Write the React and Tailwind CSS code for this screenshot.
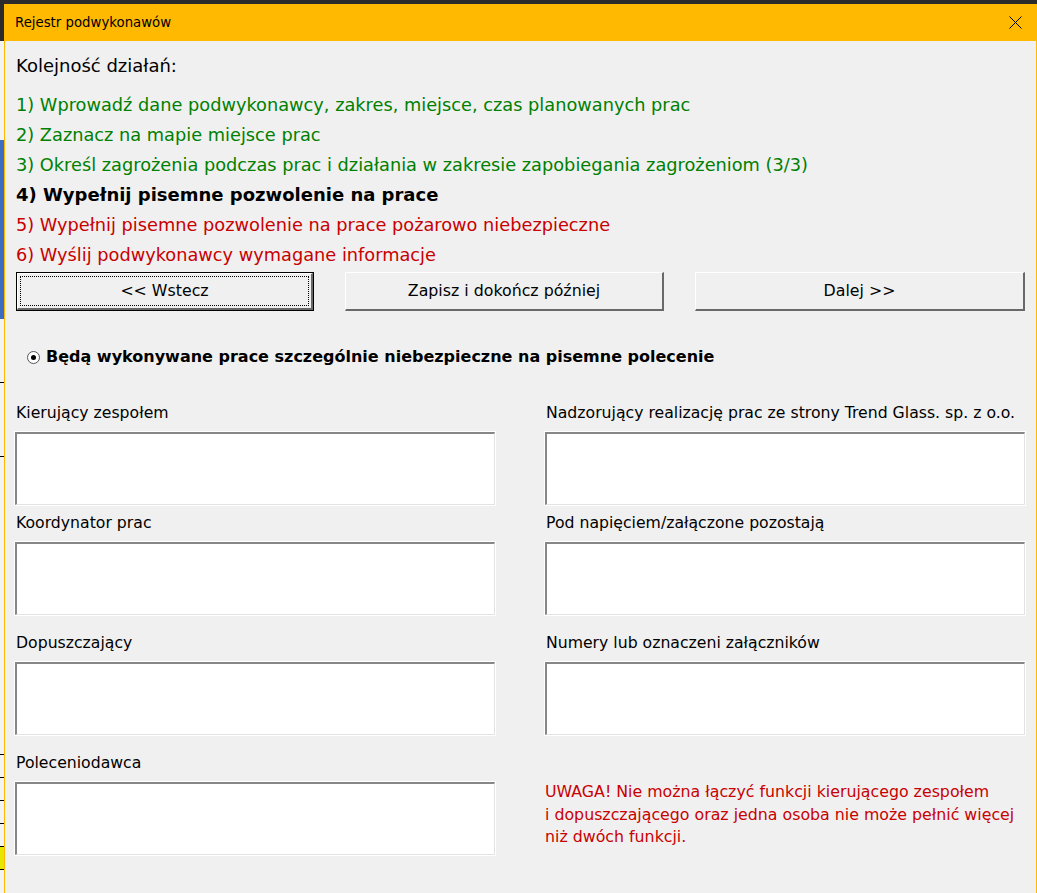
import React from "react";

const font = { fontFamily: '"DejaVu Sans", "Noto Sans", sans-serif' };

const steps = [
  { text: "1) Wprowadź dane podwykonawcy, zakres, miejsce, czas planowanych prac", cls: "text-[#008000]" },
  { text: "2) Zaznacz na mapie miejsce prac", cls: "text-[#008000]" },
  { text: "3) Określ zagrożenia podczas prac i działania w zakresie zapobiegania zagrożeniom (3/3)", cls: "text-[#008000]" },
  { text: "4) Wypełnij pisemne pozwolenie na prace", cls: "text-black font-bold" },
  { text: "5) Wypełnij pisemne pozwolenie na prace pożarowo niebezpieczne", cls: "text-[#c80000]" },
  { text: "6) Wyślij podwykonawcy wymagane informacje", cls: "text-[#c80000]" },
];

// pole tekstowe w stylu 3D (wklęsłe)
const Field = () => (
  <div className="h-[73px] bg-white border-t-2 border-l-2 border-t-[#878787] border-l-[#878787] border-b border-r border-b-[#e3e3e3] border-r-[#e3e3e3] outline outline-1 outline-white" />
);

const Group = ({ label, className = "" }) => (
  <div className={className}>
    <div className="h-[20px] leading-[20px] text-[15.7px] text-black pl-[1px] whitespace-nowrap">{label}</div>
    <div className="mt-[9px]">
      <Field />
    </div>
  </div>
);

const WinButton = ({ children, width, focused }) => (
  <div className={`h-[39px] ${width} ${focused ? "border border-black" : ""}`}>
    <div className="h-full bg-[#f0f0f0] border-t border-l border-t-white border-l-white border-b-2 border-r-2 border-b-[#696969] border-r-[#696969] flex items-center justify-center p-[2px]">
      <div
        className={`w-full h-full flex items-center justify-center text-[15.8px] text-black ${
          focused ? "border border-dotted border-black" : ""
        }`}
      >
        {children}
      </div>
    </div>
  </div>
);

export default function App() {
  return (
    <div className="w-[1037px] h-[893px] flex flex-col overflow-hidden bg-[#2b2b2b]" style={font}>
      <div className="h-[4px] bg-[#2b2b2b]" />
      <div className="flex flex-1">
        {/* fragment arkusza za oknem */}
        <div className="w-[4px] flex flex-col">
          <div className="h-[37px] bg-[#2b2b2b]" />
          <div className="flex-1 bg-[#f3f3f3] flex flex-col">
            <div className="h-[99px]" />
            <div className="h-[179px] bg-[#3d6cc0]" />
            <div className="h-[64px] border-b border-black" />
            <div className="h-[74px] border-b border-black" />
            <div className="h-[298px] border-b border-black" />
            <div className="h-[23px] border-b border-black" />
            <div className="h-[23px] border-b border-black" />
            <div className="h-[23px] border-b border-black" />
            <div className="h-[23px] border-b border-black" />
            <div className="h-[23px] bg-[#e6e600] border-b border-black" />
          </div>
        </div>

        <div className="flex-1 flex flex-col border-l border-r border-[#ffb900]">
          {/* pasek tytułu */}
          <div className="h-[37px] bg-[#ffb900] flex items-center justify-between pl-[10px] pr-[14px]">
            <span className="text-[13.3px] text-black">Rejestr podwykonawów</span>
            <svg width="13" height="13" viewBox="0 0 13 13">
              <path d="M0.5 0.5 L12.5 12.5 M12.5 0.5 L0.5 12.5" stroke="black" strokeWidth="1" />
            </svg>
          </div>

          <div className="flex-1 bg-[#f0f0f0] pl-[10px] pr-[11px]">
            <div className="pt-[12px] pl-[1px] h-[26px] leading-[26px] text-[18px] text-black box-content">
              Kolejność działań:
            </div>

            <div className="mt-[11px] pl-[1px]">
              {steps.map((s) => (
                <div
                  key={s.text}
                  className={`h-[30px] leading-[30px] whitespace-nowrap ${s.cls} ${
                    s.cls.includes("font-bold") ? "text-[18px]" : "text-[17.75px]"
                  }`}
                >
                  {s.text}
                </div>
              ))}
            </div>

            <div className="mt-[2px] flex pl-[1px]">
              <WinButton width="w-[298px]" focused>
                {"<< Wstecz"}
              </WinButton>
              <div className="ml-[31px]">
                <WinButton width="w-[319px]">Zapisz i dokończ później</WinButton>
              </div>
              <div className="ml-[31px]">
                <WinButton width="w-[330px]">{"Dalej >>"}</WinButton>
              </div>
            </div>

            <div className="mt-[34px] h-[24px] flex items-center pl-[12px]">
              <div className="w-[13px] h-[13px] rounded-full border border-[#555] bg-white flex items-center justify-center">
                <div className="w-[5px] h-[5px] rounded-full bg-black" />
              </div>
              <span className="ml-[6px] text-[16px] font-bold text-black whitespace-nowrap">
                Będą wykonywane prace szczególnie niebezpieczne na pisemne polecenie
              </span>
            </div>

            <div className="grid grid-cols-[480px_480px] gap-x-[50px]">
              <Group label="Kierujący zespołem" className="mt-[34px]" />
              <Group label="Nadzorujący realizację prac ze strony Trend Glass. sp. z o.o." className="mt-[34px]" />
              <Group label="Koordynator prac" className="mt-[8px]" />
              <Group label="Pod napięciem/załączone pozostają" className="mt-[8px]" />
              <Group label="Dopuszczający" className="mt-[18px]" />
              <Group label="Numery lub oznaczeni załączników" className="mt-[18px]" />
              <Group label="Poleceniodawca" className="mt-[18px]" />
              <div className="mt-[18px] pt-[28px] text-[15.8px] leading-[22.5px] text-[#c80000] whitespace-nowrap">
                UWAGA! Nie można łączyć funkcji kierującego zespołem
                <br />
                i dopuszczającego oraz jedna osoba nie może pełnić więcej
                <br />
                niż dwóch funkcji.
              </div>
            </div>
          </div>
        </div>
      </div>
    </div>
  );
}
